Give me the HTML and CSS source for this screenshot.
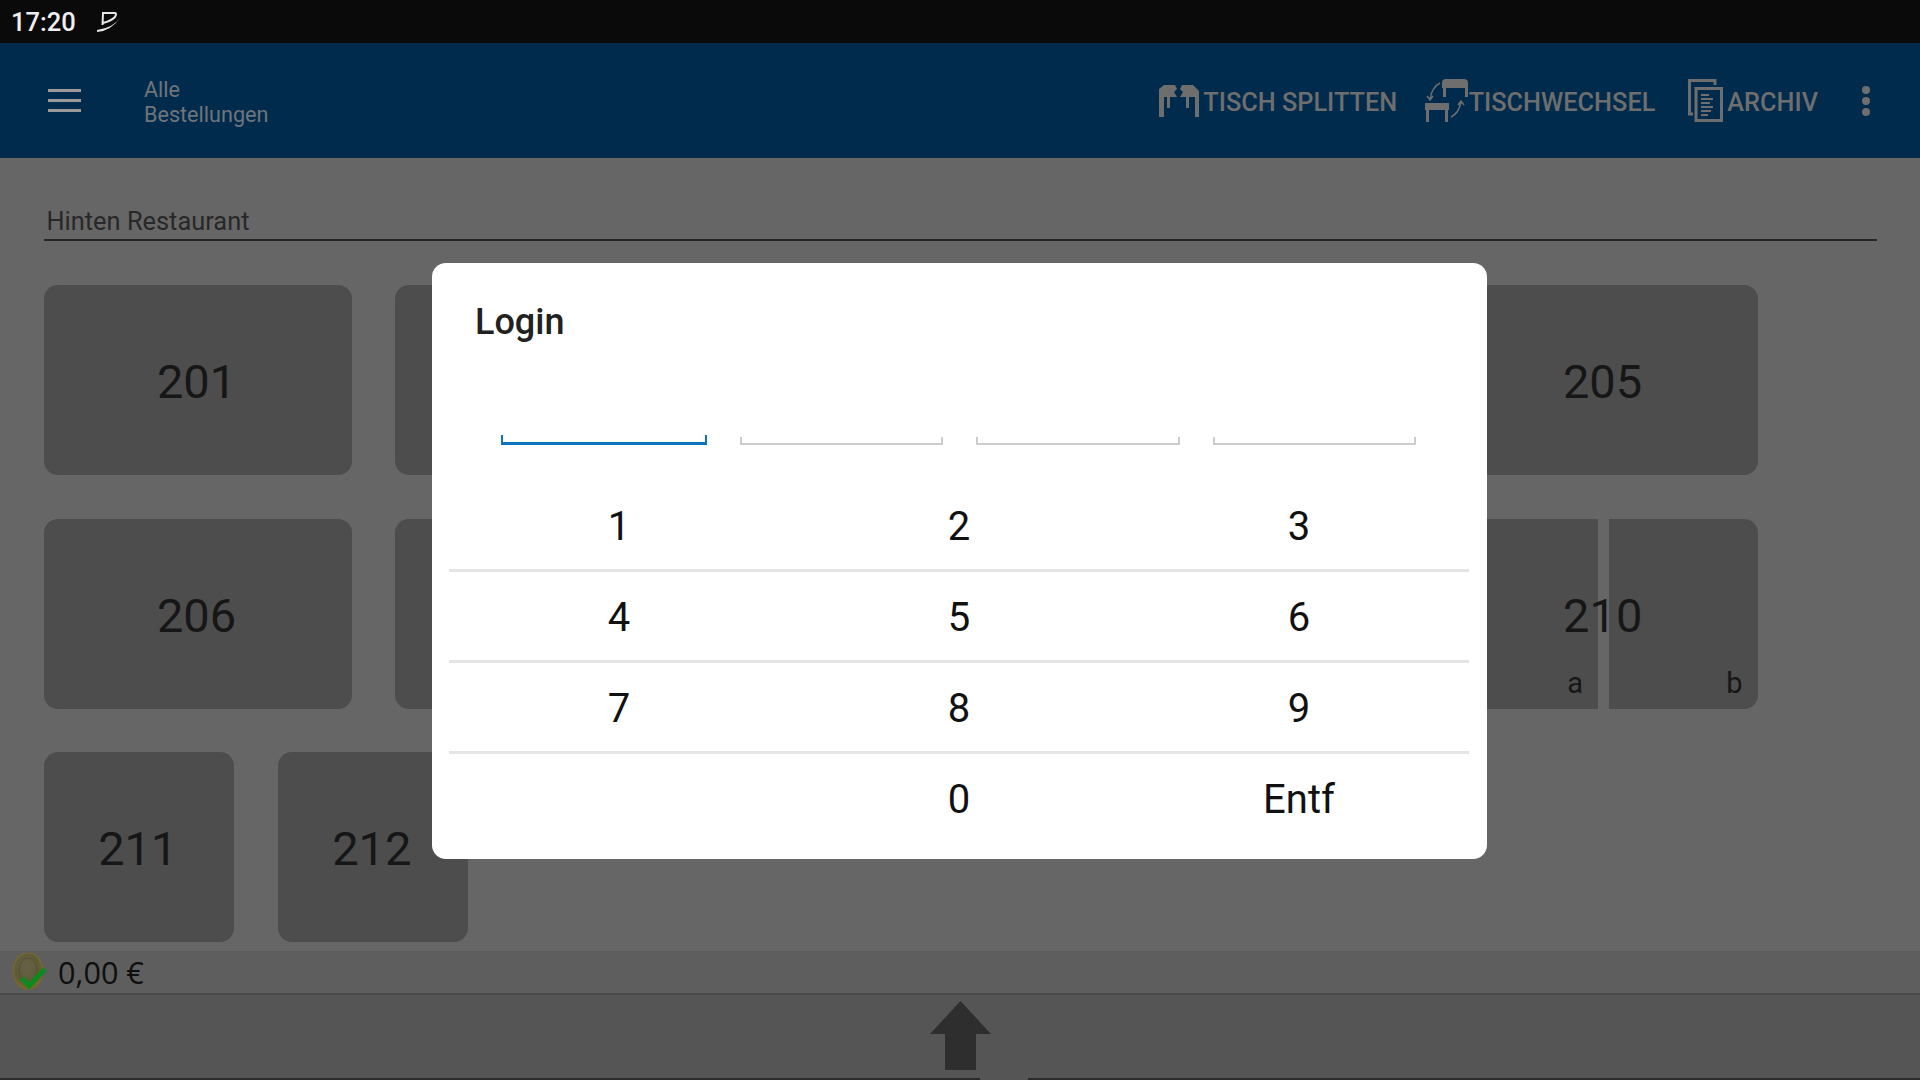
FILE: index.html
```html
<!DOCTYPE html>
<html lang="de">

<head>
    <meta charset="UTF-8">
    <title>Login</title>
    <link rel="stylesheet" href="styles.css">
</head>

<body>
    <div class="screen">
        <div class="statusbar">
            <span class="clock">17:20</span>
            <svg class="statusIcon" viewBox="0 0 24 22" width="24" height="22">
                <path d="M5 2 H18 Q20 2 18 6 Q14 10 6 12 M6 2 L5.500 14" fill="none" stroke="#e8e8e8" stroke-width="2"/>
                <path d="M0 21 Q14 20 24 6 Q16 17 0 19 Z" fill="#e8e8e8"/>
            </svg>
        </div>

        <header class="toolbar">
            <div class="burger"><i></i><i></i><i></i></div>
            <div class="title">Alle<br>Bestellungen</div>
            <div class="actions">
                <a class="action first">
                    <svg viewBox="0 0 41 33" width="41" height="33">
                        <path d="M1 5 L6 1 H17 L19 5 L16 8 L19 13 H6 V33 H1 Z M9 13 H12 V24 H9 Z" fill="#6e6e6e"/>
                        <path d="M22 5 L24 1 H35 L41 7 V33 H37 V13 H22 L25 8 Z M28 13 H31 V24 H28 Z" fill="#6e6e6e"/>
                    </svg>
                    <span>Tisch splitten</span>
                </a>
                <a class="action swap">
                    <svg viewBox="0 0 45 43" width="45" height="43">
                        <path d="M18 4 Q18 0 22 0 H40 Q44 0 44 4 V18 H41 V9 H22 V18 H19 V9 H18 Z" fill="#6e6e6e"/>
                        <path d="M1 24 H25 V31 H24 V43 H21 V31 H5 V43 H2 V31 H1 Z" fill="#6e6e6e"/>
                        <path d="M16 4 Q8 8 6 20 M3 17 L6 21 L9 17 M27 38 Q35 34 37 23 M34 26 L37 22 L40 26" fill="none" stroke="#6e6e6e" stroke-width="1.500"/>
                    </svg>
                    <span>Tischwechsel</span>
                </a>
                <a class="action archive">
                    <svg viewBox="0 0 35 43" width="35" height="43">
                        <path d="M5 35 H1.500 V1.500 H27 V6" fill="none" stroke="#6e6e6e" stroke-width="3"/>
                        <rect x="8" y="9.500" width="25.500" height="32" fill="none" stroke="#6e6e6e" stroke-width="3"/>
                        <path d="M13 16 H21 M13 20 H25 M13 24 H22 M13 28 H25 M13 32 H23 M13 36 H20" stroke="#6e6e6e" stroke-width="2"/>
                    </svg>
                    <span>Archiv</span>
                </a>
                <div class="more"><i></i><i></i><i></i></div>
            </div>
        </header>

        <main class="content">
            <h2 class="area">Hinten Restaurant</h2>
            <div class="tables">
                <div class="tile">201</div>
                <div class="tile">202</div>
                <div class="tile">203</div>
                <div class="tile">204</div>
                <div class="tile">205</div>
                <div class="tile">206</div>
                <div class="tile">207</div>
                <div class="tile">208</div>
                <div class="tile">209</div>
                <div class="tile split">
                    <div class="half left">a</div>
                    <div class="half right">b</div>
                    <span class="splitNumber">210</span>
                </div>
            </div>
            <div class="tables small">
                <div class="tile">211</div>
                <div class="tile">212</div>
            </div>
        </main>

        <div class="sumbar">
            <svg class="coin" viewBox="0 0 36 38" width="36" height="38">
                <defs>
                    <radialGradient id="gold" cx="45%" cy="40%" r="60%">
                        <stop offset="0" stop-color="#66624a"/>
                        <stop offset="0.7" stop-color="#5f5a35"/>
                        <stop offset="1" stop-color="#7a6c2a"/>
                    </radialGradient>
                </defs>
                <ellipse cx="16" cy="18" rx="14.500" ry="18" fill="url(#gold)" stroke="#75682a" stroke-width="1.500"/>
                <ellipse cx="16" cy="17" rx="9" ry="12" fill="none" stroke="#55502f" stroke-width="1"/>
                <path d="M10 25 L17 33 L33 16" fill="none" stroke="#0d8a1e" stroke-width="5"/>
            </svg>
            <span class="sum">0,00 €</span>
        </div>

        <div class="footer">
            <svg viewBox="0 0 61 69" width="61" height="69">
                <path d="M30.500 0 L61 33 H46 V69 H15 V33 H0 Z" fill="#2e2e2e"/>
            </svg>
        </div>
        <div class="navstrip"><i></i></div>
    </div>

    <div class="dialog">
        <h1 class="dialogTitle">Login</h1>
        <div class="pins">
            <div class="pin active"></div>
            <div class="pin"></div>
            <div class="pin"></div>
            <div class="pin"></div>
        </div>
        <div class="keypad">
            <div class="key">1</div>
            <div class="key">2</div>
            <div class="key">3</div>
            <div class="key">4</div>
            <div class="key">5</div>
            <div class="key">6</div>
            <div class="key">7</div>
            <div class="key">8</div>
            <div class="key">9</div>
            <div class="key"></div>
            <div class="key">0</div>
            <div class="key">Entf</div>
        </div>
    </div>
</body>

</html>
```

FILE: styles.css
```css
* {
    box-sizing: border-box;
}

html, body {
    margin: 0;
    height: 1080px;
    overflow: hidden;
    background-color: #666666;
    font-family: Roboto, "Liberation Sans", sans-serif;
}

.screen {
    display: flex;
    flex-direction: column;
    height: 1080px;
}

.statusbar {
    display: flex;
    align-items: center;
    height: 43px;
    padding-left: 11px;
    background-color: #0a0a0a;
}

.clock {
    color: #efefef;
    font-size: 25.500px;
    font-weight: 500;
}

.statusIcon {
    margin-left: 21px;
}

.toolbar {
    display: flex;
    align-items: center;
    height: 115px;
    background-color: #012b4c;
}

.burger {
    display: flex;
    flex-direction: column;
    gap: 7px;
    width: 33px;
    margin-left: 48px;
}

.burger i {
    display: block;
    height: 3px;
    background-color: #9a9a9a;
}

.title {
    margin-left: 63px;
    padding-top: 3px;
    color: #6e757b;
    font-size: 21.600px;
    line-height: 25px;
}

.actions {
    display: flex;
    align-items: center;
    margin-left: auto;
}

.action {
    display: flex;
    align-items: center;
    gap: 4px;
    margin-right: 29px;
    color: #6e6e6e;
    font-size: 25.300px;
    font-weight: 500;
    text-transform: uppercase;
}

.action span {
    padding-top: 3px;
}

.first {
    margin-right: 26.500px;
}

.swap {
    gap: 0;
}

.archive {
    margin-left: 4px;
}

.more {
    display: flex;
    flex-direction: column;
    gap: 3px;
    margin: 0 50px 0 15px;
}

.more i {
    display: block;
    width: 8px;
    height: 8px;
    border-radius: 50%;
    background-color: #6e6e6e;
}

.content {
    flex: 1;
    padding: 0 43.500px;
}

.area {
    margin: 47px 0 0;
    padding: 0 3px 1px;
    border-bottom: 2px solid #262626;
    color: #282828;
    font-size: 25.400px;
    font-weight: 400;
    line-height: 33px;
}

.tables {
    display: grid;
    grid-template-columns: repeat(5, 308px);
    gap: 43.500px;
    margin-top: 44px;
}

.tables.small {
    grid-template-columns: repeat(2, 190.500px);
    margin-top: 43.500px;
}

.tile {
    display: flex;
    align-items: center;
    justify-content: center;
    position: relative;
    height: 190px;
    padding: 3px 2px 0 0;
    border-radius: 14px;
    background-color: #4d4d4d;
    color: #161616;
    font-size: 47px;
}

.split {
    gap: 11px;
    padding: 0;
    background-color: transparent;
}

.half {
    display: flex;
    align-items: flex-end;
    justify-content: flex-end;
    flex: 1;
    height: 100%;
    padding: 0 15px 9px 0;
    background-color: #4d4d4d;
    font-size: 29px;
}

.half.left {
    border-radius: 14px 0 0 14px;
}

.half.right {
    border-radius: 0 14px 14px 0;
}

.splitNumber {
    position: absolute;
    top: 50%;
    left: 50%;
    transform: translate(-51%, -47%);
}

.sumbar {
    display: flex;
    align-items: center;
    height: 44px;
    padding-left: 12px;
    border-bottom: 2px solid #4a4a4a;
    background-color: #5e5e5e;
}

.sum {
    margin-left: 10px;
    color: #0e0e0e;
    font-family: "Open Sans", sans-serif;
    font-size: 30.600px;
}

.footer {
    display: flex;
    justify-content: center;
    height: 83px;
    padding-top: 6px;
    background-color: #555555;
}

.navstrip {
    position: relative;
    height: 2px;
    background-color: #2a2a2a;
}

.navstrip i {
    position: absolute;
    left: 980px;
    width: 48px;
    height: 2px;
    background-color: #555555;
}

.dialog {
    position: absolute;
    top: 263px;
    left: 432px;
    width: 1055px;
    height: 596px;
    border-radius: 14px;
    background-color: #ffffff;
}

.dialogTitle {
    margin: 37px 0 0 43px;
    color: #212121;
    font-size: 36px;
    font-weight: 500;
    line-height: 44px;
}

.pins {
    display: flex;
    gap: 33px;
    margin: 93px 0 0 69px;
}

.pin {
    width: 203.500px;
    height: 8px;
    border: 2px solid #cccccc;
    border-top: 0;
}

.pin.active {
    height: 10px;
    margin-top: -2px;
    width: 205.500px;
    border-color: #0b74c2;
    border-bottom-width: 3px;
}

.keypad {
    display: grid;
    grid-template-columns: repeat(3, 340px);
    grid-auto-rows: 91px;
    margin: 36px 0 0 17px;
}

.key {
    display: flex;
    align-items: center;
    justify-content: center;
    padding-top: 3px;
    border-bottom: 3px solid #e5e5e5;
    color: #111111;
    font-size: 40px;
}

.key:nth-child(n+10) {
    border-bottom: 0;
    padding-bottom: 3px;
}
```
